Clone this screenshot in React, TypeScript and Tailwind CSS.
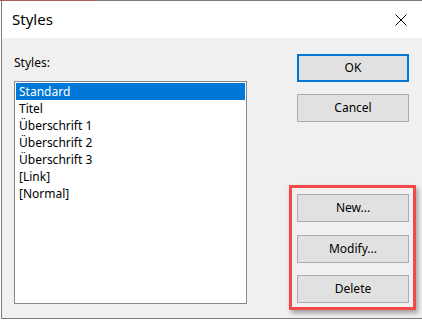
const styles = ['Standard', 'Titel', 'Überschrift 1', 'Überschrift 2', 'Überschrift 3', '[Link]', '[Normal]'];

function DlgButton({ label, focused = false }: { label: string; focused?: boolean }) {
  return (
    <button
      className={`w-[112px] h-[28px] bg-[#e1e1e1] text-[12px] text-black flex items-center justify-center ${
        focused ? 'border-2 border-[#0078d7]' : 'border border-[#adadad]'
      }`}
    >
      {label}
    </button>
  );
}

export default function App() {
  return (
    <div className="relative w-[422px] h-[320px] bg-white overflow-hidden font-['Noto_Sans',sans-serif]">
      {/* dotted markup peeking from the document behind */}
      <div className="absolute top-0 left-0 w-[95px] border-t border-dotted border-[#d04040] z-10" />

      <div className="ml-[1px] w-[421px] h-[319px] flex flex-col border-l border-t border-b border-[#7a7a7a]">
        {/* Title bar */}
        <div className="h-[37px] bg-white flex items-center pl-[10px] pr-[15px]">
          <span className="text-[15px] text-black">Styles</span>
          <svg className="ml-auto" width="12" height="12" viewBox="0 0 12 12">
            <path d="M0.5 0.5 L11.5 11.5 M11.5 0.5 L0.5 11.5" stroke="#000" strokeWidth="1" />
          </svg>
        </div>

        {/* Body */}
        <div className="flex-1 bg-[#f0f0f0] flex pl-[12px]">
          <div className="pt-[17px] flex flex-col">
            <div className="text-[12px] leading-[16px] text-black">Styles:</div>
            <div className="mt-[10px] w-[233px] h-[223px] bg-white border border-[#828790] p-[1px]">
              {styles.map((s, i) => (
                <div
                  key={s}
                  className={`h-[17px] leading-[17px] pl-[3px] text-[12px] ${
                    i === 0 ? 'bg-[#0078d7] text-white' : 'text-black'
                  }`}
                >
                  {s}
                </div>
              ))}
            </div>
          </div>

          <div className="ml-[42px] flex flex-col">
            <div className="mt-[16px] ml-[8px] flex flex-col gap-[12px]">
              <DlgButton label="OK" focused />
              <DlgButton label="Cancel" />
            </div>

            {/* highlighted button group */}
            <div className="mt-[63px] w-[127px] border-[3px] border-[#f54848] pt-[6px] pl-[5px] pb-[4px] flex flex-col shadow-[2px_3px_5px_rgba(0,0,0,0.35)]">
              <DlgButton label="New..." />
              <div className="mt-[13px]">
                <DlgButton label="Modify..." />
              </div>
              <div className="mt-[12px]">
                <DlgButton label="Delete" />
              </div>
            </div>
          </div>
        </div>
      </div>
    </div>
  );
}
